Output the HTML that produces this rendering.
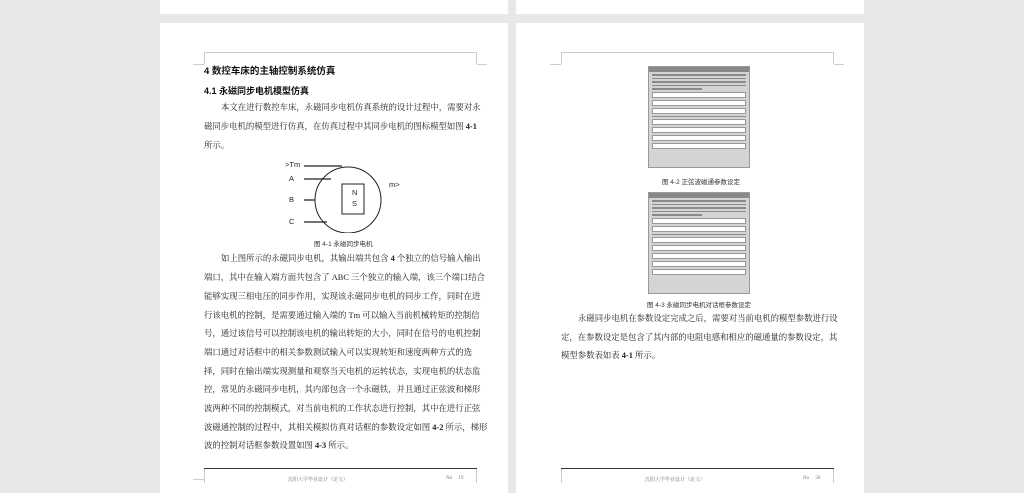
<!DOCTYPE html><html><head><meta charset="utf-8"><style>
body{margin:0;width:1024px;height:483px;background:#e8e8e8;position:relative;overflow:hidden;font-family:"Liberation Serif","Noto Serif CJK SC",serif;color:#222}
.pg{position:absolute;background:#fff}
.t{position:absolute;font-size:8.4px;white-space:nowrap;line-height:12px}
.h{font-family:"Liberation Sans","Noto Sans CJK SC",sans-serif;font-weight:bold;color:#111}
.cap{position:absolute;font-size:6.5px;font-family:"Liberation Sans","Noto Sans CJK SC",sans-serif;white-space:nowrap;color:#333}
.dlg{position:absolute;width:100px;height:100px;background:#d4d4d4;border:1px solid #999;overflow:hidden}
.dlg .tb{height:5px;background:#888}
.dlg .ln{height:1.5px;background:#8a8a8a;margin:2px 3px}
.dlg .fd{height:4px;background:#fff;border:1px solid #999;margin:2px 3px}
.ft{position:absolute;font-size:5px;color:#777;white-space:nowrap}
</style></head><body>
<div class="pg" style="left:160px;top:0;width:348px;height:14px"></div>
<div class="pg" style="left:516px;top:0;width:348px;height:14px"></div>
<div class="pg" style="left:160px;top:23px;width:348px;height:470px"></div>
<div class="pg" style="left:516px;top:23px;width:348px;height:470px"></div>
<div style="position:absolute;left:204px;top:52px;width:1px;height:12px;background:#ccc"></div>
<div style="position:absolute;left:204px;top:52px;width:272px;height:1px;background:#ccc"></div>
<div style="position:absolute;left:476px;top:52px;width:1px;height:12px;background:#ccc"></div>
<div style="position:absolute;left:193px;top:64px;width:11px;height:1px;background:#ccc"></div>
<div style="position:absolute;left:477px;top:64px;width:10px;height:1px;background:#ccc"></div>
<div style="position:absolute;left:561px;top:52px;width:1px;height:12px;background:#ccc"></div>
<div style="position:absolute;left:561px;top:52px;width:272px;height:1px;background:#ccc"></div>
<div style="position:absolute;left:833px;top:52px;width:1px;height:12px;background:#ccc"></div>
<div style="position:absolute;left:550px;top:64px;width:11px;height:1px;background:#ccc"></div>
<div style="position:absolute;left:834px;top:64px;width:10px;height:1px;background:#ccc"></div>

<div class="t h" style="left:204px;top:66px;font-size:9.5px">4 数控车床的主轴控制系统仿真</div>
<div class="t h" style="left:204px;top:85px;font-size:9px">4.1 永磁同步电机模型仿真</div>
<div class="t" style="left:221px;top:102px">本文在进行数控车床，永磁同步电机仿真系统的设计过程中，需要对永</div>
<div class="t" style="left:204px;top:121px">磁同步电机的模型进行仿真，在仿真过程中其同步电机的图标模型如图 <b>4-1</b></div>
<div class="t" style="left:204px;top:140px">所示。</div>
<svg style="position:absolute;left:280px;top:158px" width="130" height="75">
<g font-family="Liberation Sans" font-size="7.5" fill="#222"><text x="5" y="9">&gt;Tm</text><text x="9" y="23">A</text><text x="9" y="44">B</text><text x="9" y="66">C</text><text x="109" y="29">m&gt;</text><text x="72" y="37">N</text><text x="72" y="48">S</text></g>
<g stroke="#222" fill="none" stroke-width="1"><circle cx="68" cy="42" r="33"/><rect x="62" y="26" width="22" height="30"/>
<path d="M24 8H62M24 21H51M24 42H35M24 64H47" stroke-width="1.3"/></g></svg>
<div class="cap" style="left:314px;top:238px">图 4-1 永磁同步电机</div>
<div class="t" style="left:221px;top:253px">如上图所示的永磁同步电机，其输出端共包含 <b>4</b> 个独立的信号输入输出</div>
<div class="t" style="left:204px;top:272px">端口，其中在输入端方面共包含了 ABC 三个独立的输入端，该三个端口结合</div>
<div class="t" style="left:204px;top:291px">能够实现三相电压的同步作用，实现该永磁同步电机的同步工作，同时在进</div>
<div class="t" style="left:204px;top:310px">行该电机的控制，是需要通过输入端的 Tm 可以输入当前机械转矩的控制信</div>
<div class="t" style="left:204px;top:328px">号，通过该信号可以控制该电机的输出转矩的大小，同时在信号的电机控制</div>
<div class="t" style="left:204px;top:347px">端口通过对话框中的相关参数测试输入可以实现转矩和速度两种方式的选</div>
<div class="t" style="left:204px;top:366px">择，同时在输出端实现测量和观察当天电机的运转状态，实现电机的状态监</div>
<div class="t" style="left:204px;top:384px">控，常见的永磁同步电机，其内部包含一个永磁铁，并且通过正弦波和梯形</div>
<div class="t" style="left:204px;top:403px">波两种不同的控制模式，对当前电机的工作状态进行控制，其中在进行正弦</div>
<div class="t" style="left:204px;top:422px">波磁通控制的过程中，其相关模拟仿真对话框的参数设定如图 <b>4-2</b> 所示，梯形</div>
<div class="t" style="left:204px;top:440px">波的控制对话框参数设置如图 <b>4-3</b> 所示。</div>

<div style="position:absolute;left:204px;top:468px;width:273px;height:1px;background:#333"></div>
<div style="position:absolute;left:193px;top:479px;width:11px;height:1px;background:#ccc"></div>
<div style="position:absolute;left:204px;top:469px;width:1px;height:14px;background:#ccc"></div>
<div style="position:absolute;left:476px;top:469px;width:1px;height:14px;background:#ccc"></div>
<div class="ft" style="left:288px;top:476px">沈阳大学毕业设计（论文）</div>
<div class="ft" style="left:446px;top:476px">No&nbsp;&nbsp;&nbsp;&nbsp;&nbsp;19</div>

<div style="position:absolute;left:561px;top:468px;width:273px;height:1px;background:#333"></div>
<div style="position:absolute;left:561px;top:469px;width:1px;height:14px;background:#ccc"></div>
<div style="position:absolute;left:833px;top:469px;width:1px;height:14px;background:#ccc"></div>
<div class="ft" style="left:645px;top:476px">沈阳大学毕业设计（论文）</div>
<div class="ft" style="left:803px;top:476px">No&nbsp;&nbsp;&nbsp;&nbsp;&nbsp;20</div>

<div class="dlg" style="left:648px;top:66px"><div class="tb"></div>
<div class="ln"></div><div class="ln"></div><div class="ln"></div><div class="ln"></div><div class="ln" style="width:50px"></div>
<div class="fd"></div><div class="fd"></div><div class="fd"></div><div class="ln"></div><div class="fd"></div><div class="fd"></div><div class="fd"></div><div class="fd"></div></div>
<div class="cap" style="left:662px;top:176px">图 4-2 正弦波磁通参数设定</div>
<div class="dlg" style="left:648px;top:192px"><div class="tb"></div>
<div class="ln"></div><div class="ln"></div><div class="ln"></div><div class="ln"></div><div class="ln" style="width:50px"></div>
<div class="fd"></div><div class="fd"></div><div class="ln"></div><div class="fd"></div><div class="fd"></div><div class="fd"></div><div class="fd"></div><div class="fd"></div></div>
<div class="cap" style="left:647px;top:299px">图 4-3 永磁同步电机对话框参数设定</div>
<div class="t" style="left:578px;top:313px">永磁同步电机在参数设定完成之后，需要对当前电机的模型参数进行设</div>
<div class="t" style="left:561px;top:332px">定，在参数设定是包含了其内部的电阻电感和相应的磁通量的参数设定，其</div>
<div class="t" style="left:561px;top:350px">模型参数表如表 <b>4-1</b> 所示。</div>
</body></html>
